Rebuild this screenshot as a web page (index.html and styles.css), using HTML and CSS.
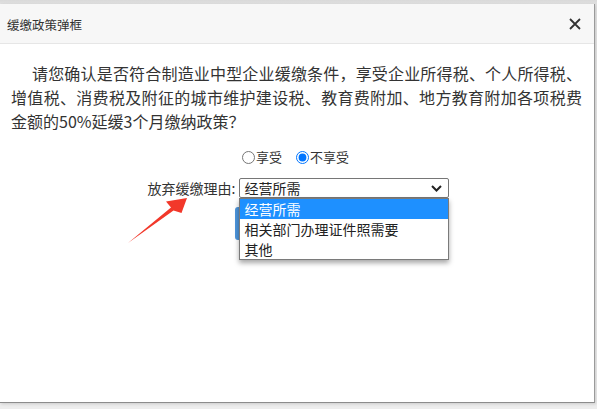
FILE: index.html
```html
<!DOCTYPE html>
<html lang="zh-CN">
<head>
    <meta charset="UTF-8">
    <meta name="viewport" content="width=device-width, initial-scale=1.0">
    <title>缓缴政策弹框</title>
    <link rel="stylesheet" href="styles.css">
</head>
<body>
    <div class="dialog">
        <div class="dialog-header">
            <span class="dialog-title">缓缴政策弹框</span>
            <button class="close" title="关闭">
                <svg width="12" height="12" viewBox="0 0 12 12"><path d="M1 1L11 11M11 1L1 11" stroke="#333" stroke-width="1.8" fill="none"/></svg>
            </button>
        </div>
        <div class="dialog-body">
            <p class="notice">请您确认是否符合制造业中型企业缓缴条件，享受企业所得税、个人所得税、增值税、消费税及附征的城市维护建设税、教育费附加、地方教育附加各项税费金额的50%延缓3个月缴纳政策？</p>

            <div class="choice">
                <label><input type="radio" name="enjoy">享受</label>
                <label><input type="radio" name="enjoy" checked>不享受</label>
            </div>

            <div class="reason-row">
                <span class="reason-label">放弃缓缴理由:</span>
                <div class="select-wrap">
                    <div class="select">
                        <span>经营所需</span>
                        <svg width="11" height="7" viewBox="0 0 11 7"><path d="M1 1L5.5 5.5L10 1" stroke="#222" stroke-width="2" fill="none"/></svg>
                    </div>
                    <ul class="options">
                        <li class="active">经营所需</li>
                        <li>相关部门办理证件照需要</li>
                        <li>其他</li>
                    </ul>
                </div>
            </div>

            <!-- 按钮被下拉框挡住 -->
            <div class="actions">
                <button class="btn-primary" aria-label="确定"></button>
            </div>
        </div>
    </div>

    <!-- 标注箭头 -->
    <svg class="arrow" width="597" height="409" viewBox="0 0 597 409">
        <polygon points="128,243 171,207.5 166,201.5 187,198 181.5,213 173.5,210.5" fill="#f2382a"/>
    </svg>
</body>
</html>
```

FILE: styles.css
```css
body {
    margin: 0;
    position: relative;
    width: 597px;
    height: 409px;
    overflow: hidden;
    background: linear-gradient(#d9d9d9, #e6e6e6 6px, #ededed);
    font-family: "Noto Sans CJK SC", "Liberation Sans", sans-serif;
    color: #333;
}

/* 弹框 */
.dialog {
    margin-top: 4px;
    width: 594px;
    height: 398px;
    background-color: #fff;
    border-right: 1px solid #9a9a9a;
    border-bottom: 1px solid #8c8c8c;
    box-shadow: 1px 1px 3px rgba(0, 0, 0, 0.15);
}

.dialog-header {
    height: 39px;
    background-color: #f7f7f7;
    border-bottom: 1px solid #e6e6e6;
    display: flex;
    align-items: center;
    justify-content: space-between;
    padding: 0 13px 0 7px;
}

.dialog-title {
    font-size: 12.5px;
    line-height: 16px;
    margin-top: 2px;
    color: #333;
}

.close {
    border: none;
    background: none;
    padding: 0;
    width: 12px;
    height: 12px;
    margin-top: 1px;
    cursor: pointer;
    display: flex;
}

.dialog-body {
    padding: 17px 12px 0 11px;
}

.notice {
    margin: 0;
    font-size: 16px;
    line-height: 24px;
    text-indent: 21px;
    text-align: justify;
    color: #333;
}

/* 单选 */
.choice {
    margin-top: 14px;
    height: 20px;
    display: flex;
    justify-content: center;
    gap: 14px;
    font-size: 13px;
    line-height: 20px;
    padding-right: 2px;
}

.choice label {
    display: flex;
    align-items: center;
}

.choice input {
    margin: 0 1px 0 0;
    width: 13px;
    height: 13px;
}

/* 理由选择 */
.reason-row {
    margin-top: 11px;
    display: flex;
    justify-content: center;
    align-items: center;
    height: 20px;
    padding-left: 4px;
}

.reason-label {
    font-size: 14px;
    line-height: 20px;
    margin-right: 4px;
}

.select-wrap {
    position: relative;
    z-index: 2;
}

.select {
    box-sizing: border-box;
    width: 210px;
    height: 20px;
    border: 1px solid #767676;
    border-radius: 2px;
    display: flex;
    align-items: center;
    justify-content: space-between;
    padding: 0 6px 0 4px;
    font-size: 14px;
    line-height: 18px;
    color: #222;
    background-color: #fff;
}

.options {
    position: absolute;
    top: 20px;
    left: 0;
    box-sizing: border-box;
    width: 210px;
    margin: 0;
    padding: 0;
    list-style: none;
    background-color: #fff;
    border: 1px solid #7a7a7a;
    box-shadow: 0 3px 5px rgba(0, 0, 0, 0.35);
}

.options li {
    height: 20px;
    line-height: 20px;
    padding-left: 4px;
    font-size: 14px;
    color: #222;
}

.options li.active {
    background-color: #1e90ff;
    color: #fff;
}

/* 按钮 */
.actions {
    margin-top: 9px;
    display: flex;
    justify-content: center;
    padding-left: 6px;
}

.btn-primary {
    width: 130px;
    height: 33px;
    border: none;
    border-radius: 3px;
    background-color: #4d95db;
}

.arrow {
    position: absolute;
    top: 0;
    left: 0;
    pointer-events: none;
    z-index: 5;
}
```
